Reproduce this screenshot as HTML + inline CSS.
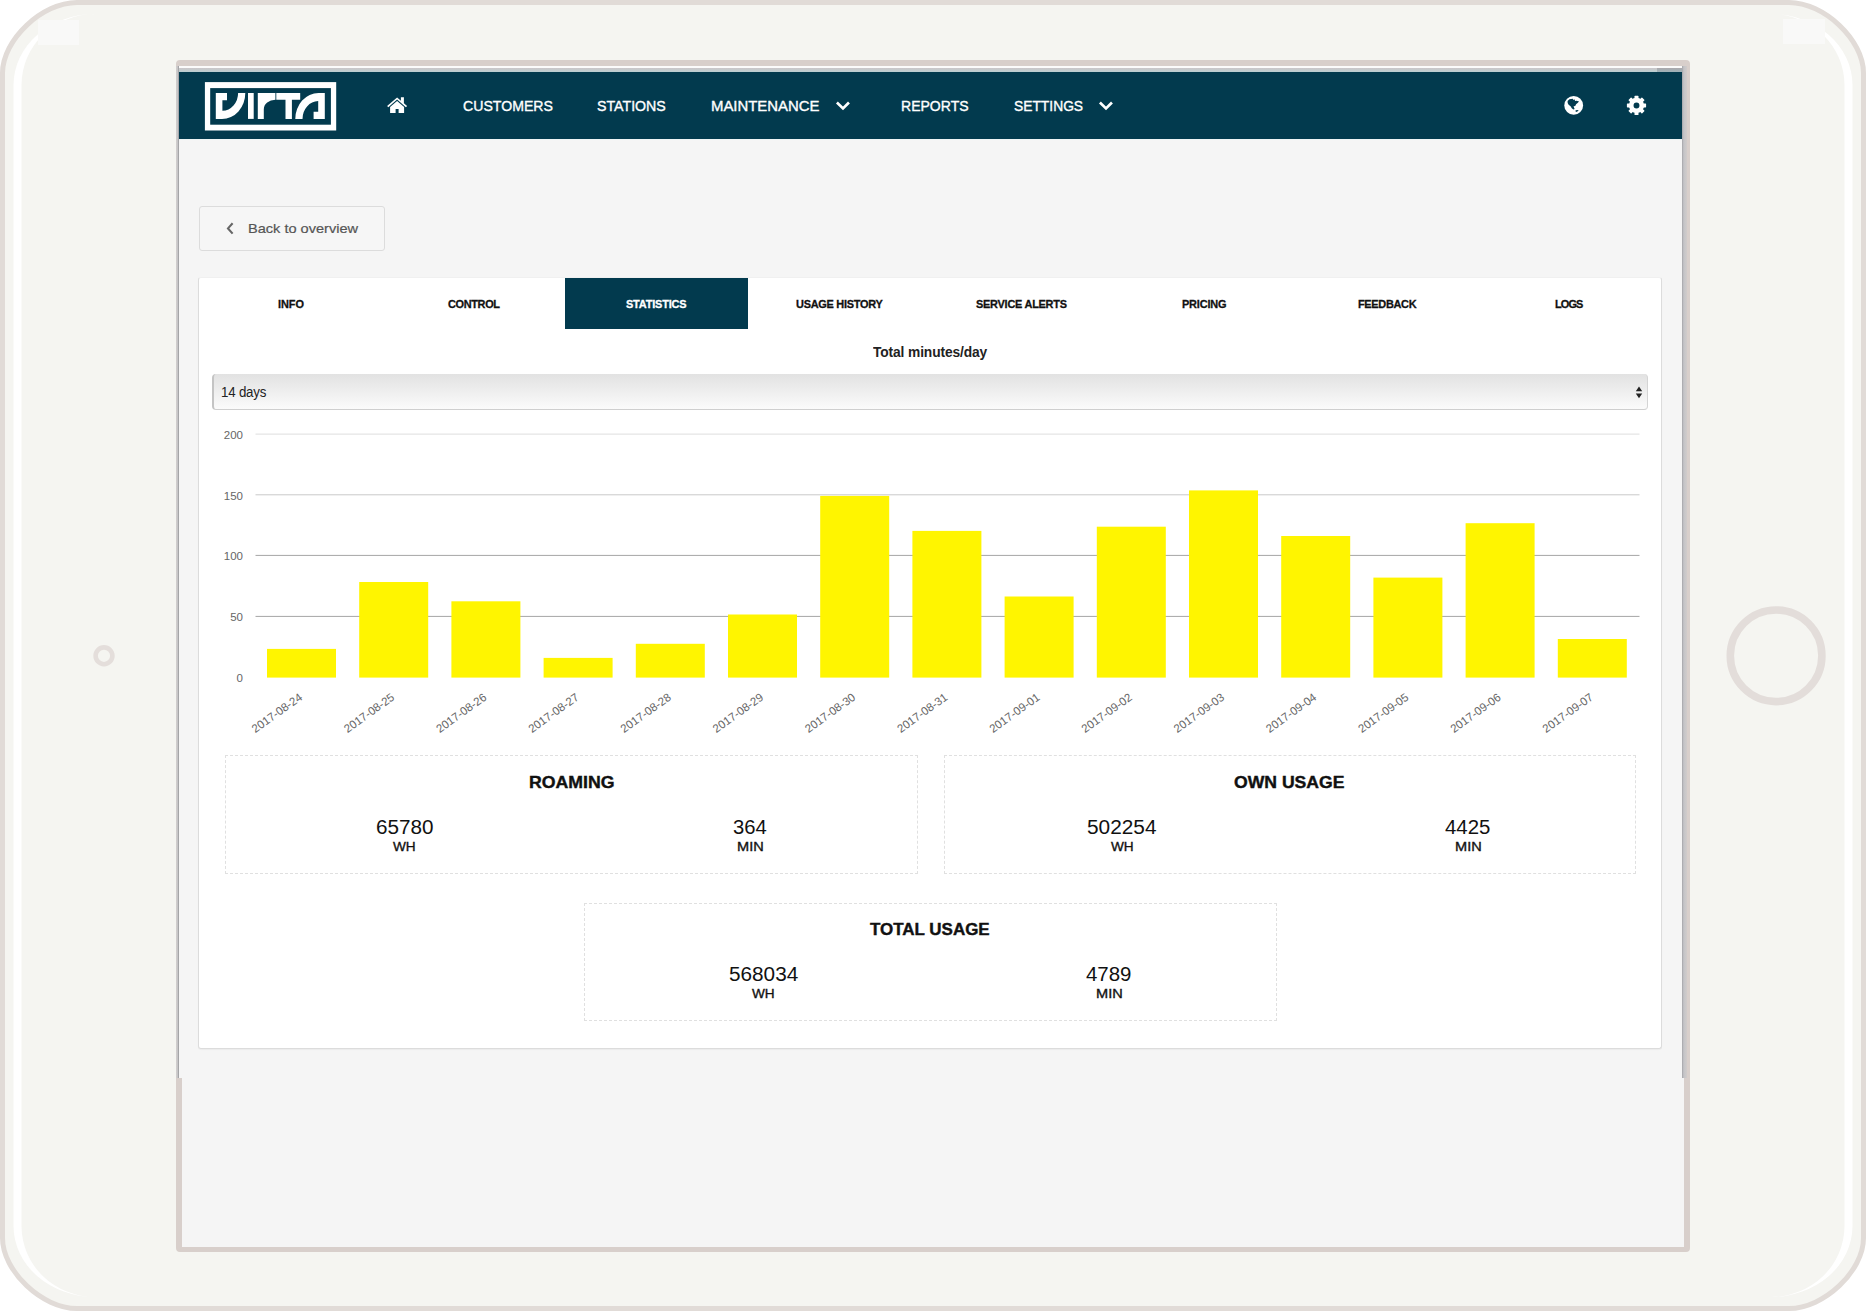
<!DOCTYPE html>
<html><head><meta charset="utf-8"><title>Virta</title>
<style>
html,body{margin:0;padding:0;background:#fff}
body{width:1866px;height:1311px;position:relative;overflow:hidden;font-family:"Liberation Sans",sans-serif}
.a{position:absolute}
.t{position:absolute;white-space:nowrap;line-height:1}
</style></head><body>

<svg class="a" style="left:0;top:0" width="1866" height="1311" viewBox="0 0 1866 1311"><path d="M2.5 73 C2.5 39.865 41.985 2.5 77 2.5 H1789 C1824.02 2.5 1863.5 39.865 1863.5 73 V1238 C1863.5 1271.13 1824.02 1308.5 1789 1308.5 H77 C41.985 1308.5 2.5 1271.13 2.5 1238 Z" fill="#f5f5f1" stroke="#e1dbd7" stroke-width="5"/></svg>
<svg class="a" style="left:0;top:0" width="1866" height="1311" viewBox="0 0 1866 1311">
<g fill="#ffffff">
<path d="M13.5 85 A81.5 71 0 0 1 95 14 A73.5 71 0 0 0 21.5 85 L21.5 1226 A73.5 71 0 0 0 95 1297 A81.5 71 0 0 1 13.5 1226 Z"/>
<path d="M1852.5 85 A81.5 71 0 0 0 1771 14 A73.5 71 0 0 1 1844.5 85 L1844.5 1226 A73.5 71 0 0 1 1771 1297 A81.5 71 0 0 0 1852.5 1226 Z"/>
</g>
<rect x="38" y="20" width="41" height="25" fill="#f9f9f8"/>
<rect x="1783" y="19" width="42" height="25" fill="#f9f9f8"/>
<circle cx="104" cy="655.8" r="8.4" fill="none" stroke="#e4dedb" stroke-width="4.6"/>
<circle cx="1776.1" cy="655.8" r="45.8" fill="none" stroke="#e3ddda" stroke-width="7.6"/>
</svg>
<div class="a" style="left:176px;top:60px;width:1502px;height:1181px;border:solid #d8cfcb;border-width:6px 6px 5px 6px;border-radius:4px;background:#f5f5f5"></div>
<div class="a" style="left:179px;top:66px;width:1503px;height:1012px;background:#f5f5f5"></div>
<div class="a" style="left:175.5px;top:66px;width:3.5px;height:1012px;background:linear-gradient(90deg,#d4d0cf 0,#c4c4c6 60%,#8f8f92 100%)"></div>
<div class="a" style="left:1682px;top:66px;width:4.5px;height:1012px;background:linear-gradient(90deg,#a4a4a8 0,#c4c4c7 35%,#d0cccb 100%)"></div>
<div class="a" style="left:179px;top:66px;width:1503px;height:2px;background:#fbfbfb"></div>
<div class="a" style="left:179px;top:68px;width:1503px;height:4px;background:linear-gradient(180deg,#cbc6ca 0,#c4cbcd 50%,#b9cfd3 100%)"></div>
<div class="a" style="left:1657px;top:68px;width:25px;height:4px;background:linear-gradient(180deg,#aca8ac 0,#a4adb2 50%,#9fb3ba 100%)"></div>
<div class="a" style="left:179px;top:72px;width:1503px;height:66.7px;background:#023a4e"></div>
<div class="a" style="left:179px;top:138.7px;width:1503px;height:1.6px;background:#eef5f6"></div>
<svg class="a" style="left:0;top:0" width="1866" height="200" viewBox="0 0 1866 200">
<rect x="204.9" y="82.1" width="131.3" height="48.4" fill="#fff"/>
<rect x="210.2" y="88.1" width="120.7" height="36.6" fill="#023a4e"/>
<g fill="#fff">
<path id="vv" d="M215.8 93 H227 V100.2 H222.4 V110.8 A16.1 17.8 0 0 0 238.1 93 H245.3 A23.3 26 0 0 1 222 119 H215.8 Z"/>
<rect x="248" y="93" width="5.7" height="25.9"/>
<path d="M257.8 93 H275.4 V99.75 A11.6 9.6 0 0 0 263.8 109.4 V118.9 H257.8 Z"/>
<path d="M276.3 93 H300.2 V99.75 H291.9 V118.9 H285.5 V99.75 H276.3 Z"/>
<path transform="rotate(180 270.3 105.95)" d="M215.8 93 H227 V100.2 H222.4 V110.8 A16.1 17.8 0 0 0 238.1 93 H245.3 A23.3 26 0 0 1 222 119 H215.8 Z"/>
</g>
</svg>
<div class="a" style="left:198px;top:277px;width:1464px;height:771.5px;background:#fff;border:1px solid #dcdcdc;border-top-color:#f0f0f0;box-sizing:border-box;border-radius:3px;box-shadow:0 1px 1px rgba(0,0,0,0.04)"></div>
<div class="a" style="left:199px;top:206px;width:186px;height:45px;box-sizing:border-box;border:1px solid #dcdcdc;border-radius:3px;background:#f6f6f6"></div>
<svg class="a" style="left:224px;top:220px" width="12" height="16" viewBox="0 0 12 16"><path d="M8.6 3.3 L4.0 8.4 L8.6 13.6" fill="none" stroke="#666" stroke-width="2.1" stroke-linecap="butt" stroke-linejoin="miter"/></svg>
<div class="a" style="left:565.2px;top:278px;width:182.6px;height:51px;background:#023a4e"></div>
<div class="a" style="left:212px;top:374px;width:1436px;height:35.6px;box-sizing:border-box;border-radius:4px;background:linear-gradient(180deg,#e2e2e2 0,#ededed 45%,#fbfbfb 100%);border-bottom:1px solid #cfcfcf;border-left:2px solid #c4c4c4;border-right:1px solid #d4d4d4"></div>
<svg class="a" style="left:1634px;top:385px" width="10" height="15" viewBox="0 0 10 15"><path d="M5 1.6 L8.2 6.2 L1.8 6.2 Z M5 13.2 L8.2 8.6 L1.8 8.6 Z" fill="#222"/></svg>
<svg class="a" style="left:0;top:0" width="1866" height="760" viewBox="0 0 1866 760" font-family="'Liberation Sans', sans-serif" font-size="11.5" fill="#666">
<rect x="255.5" y="433.6" width="1384" height="1" fill="#dedede"/>
<rect x="255.5" y="494.3" width="1384" height="1" fill="#c9c9c9"/>
<rect x="255.5" y="554.9" width="1384" height="1" fill="#a6a6a6"/>
<rect x="255.5" y="615.9" width="1384" height="1" fill="#a6a6a6"/>
<text x="243" y="439.0" text-anchor="end">200</text>
<text x="243" y="499.7" text-anchor="end">150</text>
<text x="243" y="560.3" text-anchor="end">100</text>
<text x="243" y="621.3" text-anchor="end">50</text>
<text x="243" y="682.4" text-anchor="end">0</text>
<rect x="267.0" y="648.9" width="69" height="28.7" fill="#fff500"/>
<rect x="359.2" y="582.0" width="69" height="95.6" fill="#fff500"/>
<rect x="451.4" y="601.3" width="69" height="76.3" fill="#fff500"/>
<rect x="543.6" y="657.9" width="69" height="19.7" fill="#fff500"/>
<rect x="635.8" y="643.8" width="69" height="33.8" fill="#fff500"/>
<rect x="728.0" y="614.5" width="69" height="63.1" fill="#fff500"/>
<rect x="820.2" y="495.9" width="69" height="181.7" fill="#fff500"/>
<rect x="912.4" y="530.9" width="69" height="146.7" fill="#fff500"/>
<rect x="1004.6" y="596.5" width="69" height="81.1" fill="#fff500"/>
<rect x="1096.8" y="526.7" width="69" height="150.9" fill="#fff500"/>
<rect x="1189.0" y="490.4" width="69" height="187.2" fill="#fff500"/>
<rect x="1281.2" y="536.0" width="69" height="141.6" fill="#fff500"/>
<rect x="1373.4" y="577.6" width="69" height="100.0" fill="#fff500"/>
<rect x="1465.6" y="523.2" width="69" height="154.4" fill="#fff500"/>
<rect x="1557.8" y="639.0" width="69" height="38.6" fill="#fff500"/>
<text transform="translate(300.7 695.6) rotate(-35.7)" text-anchor="end" dy="4.1">2017-08-24</text>
<text transform="translate(392.9 695.6) rotate(-35.7)" text-anchor="end" dy="4.1">2017-08-25</text>
<text transform="translate(485.1 695.6) rotate(-35.7)" text-anchor="end" dy="4.1">2017-08-26</text>
<text transform="translate(577.3 695.6) rotate(-35.7)" text-anchor="end" dy="4.1">2017-08-27</text>
<text transform="translate(669.5 695.6) rotate(-35.7)" text-anchor="end" dy="4.1">2017-08-28</text>
<text transform="translate(761.7 695.6) rotate(-35.7)" text-anchor="end" dy="4.1">2017-08-29</text>
<text transform="translate(853.9 695.6) rotate(-35.7)" text-anchor="end" dy="4.1">2017-08-30</text>
<text transform="translate(946.1 695.6) rotate(-35.7)" text-anchor="end" dy="4.1">2017-08-31</text>
<text transform="translate(1038.3 695.6) rotate(-35.7)" text-anchor="end" dy="4.1">2017-09-01</text>
<text transform="translate(1130.5 695.6) rotate(-35.7)" text-anchor="end" dy="4.1">2017-09-02</text>
<text transform="translate(1222.7 695.6) rotate(-35.7)" text-anchor="end" dy="4.1">2017-09-03</text>
<text transform="translate(1314.9 695.6) rotate(-35.7)" text-anchor="end" dy="4.1">2017-09-04</text>
<text transform="translate(1407.1 695.6) rotate(-35.7)" text-anchor="end" dy="4.1">2017-09-05</text>
<text transform="translate(1499.3 695.6) rotate(-35.7)" text-anchor="end" dy="4.1">2017-09-06</text>
<text transform="translate(1591.5 695.6) rotate(-35.7)" text-anchor="end" dy="4.1">2017-09-07</text>
</svg>
<div class="a" style="left:225.3px;top:755.3px;width:692.9px;height:118.5px;box-sizing:border-box;border:1px dashed #e0e0e0"></div>
<div class="a" style="left:944.0px;top:755.3px;width:692.2px;height:118.5px;box-sizing:border-box;border:1px dashed #e0e0e0"></div>
<div class="a" style="left:584.1px;top:902.5px;width:692.5px;height:118.2px;box-sizing:border-box;border:1px dashed #e0e0e0"></div>
<svg class="a" style="left:0;top:0" width="1866" height="200" viewBox="0 0 1866 200">
<g fill="#fff">
<path d="M387.1 105.9 L397.1 97.6 L400.9 100.8 V97.2 H403.9 V103.3 L407.1 105.9 L405.9 107.3 L397.1 99.6 L388.3 107.3 Z"/>
<path d="M390.1 107 L397.1 100.9 L404.1 107 V112.9 H398.6 V108.9 H395.6 V112.9 H390.1 Z"/>
</g>
<path d="M837.9 103.5 L843.0 108.4 L848.0 103.5" fill="none" stroke="#fff" stroke-width="2.7" stroke-linecap="square"/><path d="M1100.9 103.5 L1106.0 108.4 L1111.0 103.5" fill="none" stroke="#fff" stroke-width="2.7" stroke-linecap="square"/>
<circle cx="1573.7" cy="105.4" r="9.4" fill="#fff"/>
<path d="M1567.58 101.02 L1569.40 99.20 L1572.64 98.63 L1573.50 100.06 L1574.36 99.30 L1575.22 100.92 L1576.65 100.63 L1579.03 101.40 L1577.60 102.92 L1576.08 104.26 L1575.22 105.98 L1573.60 106.36 L1574.17 108.08 L1574.65 109.03 L1573.40 109.60 L1571.78 108.27 L1570.54 106.36 L1568.63 104.83 L1567.68 102.92 Z" fill="#023a4e"/><path d="M1575.22 110.84 L1576.84 109.89 L1578.65 110.27 L1577.79 111.32 L1576.08 112.08 Z" fill="#023a4e"/>
<g fill="#fff"><rect x="1634.50" y="95.85" width="4" height="5" rx="0.6" transform="rotate(0 1636.50 105.45)"/><rect x="1634.50" y="95.85" width="4" height="5" rx="0.6" transform="rotate(45 1636.50 105.45)"/><rect x="1634.50" y="95.85" width="4" height="5" rx="0.6" transform="rotate(90 1636.50 105.45)"/><rect x="1634.50" y="95.85" width="4" height="5" rx="0.6" transform="rotate(135 1636.50 105.45)"/><rect x="1634.50" y="95.85" width="4" height="5" rx="0.6" transform="rotate(180 1636.50 105.45)"/><rect x="1634.50" y="95.85" width="4" height="5" rx="0.6" transform="rotate(225 1636.50 105.45)"/><rect x="1634.50" y="95.85" width="4" height="5" rx="0.6" transform="rotate(270 1636.50 105.45)"/><rect x="1634.50" y="95.85" width="4" height="5" rx="0.6" transform="rotate(315 1636.50 105.45)"/></g><circle cx="1636.50" cy="105.45" r="5.3" fill="none" stroke="#fff" stroke-width="4.7"/>
</svg>
<span class="t" style="left:462.50px;top:99.35px;font-size:14px;font-weight:normal;color:#fff;transform:scaleX(1.0089);transform-origin:0 0;-webkit-text-stroke:0.35px #fff;">CUSTOMERS</span>
<span class="t" style="left:597.30px;top:99.35px;font-size:14px;font-weight:normal;color:#fff;transform:scaleX(1.0127);transform-origin:0 0;-webkit-text-stroke:0.35px #fff;">STATIONS</span>
<span class="t" style="left:710.80px;top:99.35px;font-size:14px;font-weight:normal;color:#fff;transform:scaleX(1.0647);transform-origin:0 0;-webkit-text-stroke:0.35px #fff;">MAINTENANCE</span>
<span class="t" style="left:901.30px;top:99.35px;font-size:14px;font-weight:normal;color:#fff;transform:scaleX(1.0024);transform-origin:0 0;-webkit-text-stroke:0.35px #fff;">REPORTS</span>
<span class="t" style="left:1013.60px;top:99.35px;font-size:14px;font-weight:normal;color:#fff;letter-spacing:0.000px;transform:scaleX(0.9869);transform-origin:0 0;-webkit-text-stroke:0.35px #fff;">SETTINGS</span>
<span class="t" style="left:248.40px;top:222.17px;font-size:13.5px;font-weight:normal;color:#555;transform:scaleX(1.0789);transform-origin:0 0;-webkit-text-stroke:0.2px #555;">Back to overview</span>
<span class="t" style="left:278.31px;top:298.67px;font-size:11.5px;font-weight:bold;color:#111;letter-spacing:-0.039px;transform:scaleX(0.9500);transform-origin:0 0;-webkit-text-stroke:0.3px #111;">INFO</span>
<span class="t" style="left:447.94px;top:298.67px;font-size:11.5px;font-weight:bold;color:#111;letter-spacing:-0.354px;transform:scaleX(0.9500);transform-origin:0 0;-webkit-text-stroke:0.3px #111;">CONTROL</span>
<span class="t" style="left:626.31px;top:298.67px;font-size:11.5px;font-weight:bold;color:#fff;letter-spacing:-0.190px;transform:scaleX(0.9500);transform-origin:0 0;-webkit-text-stroke:0.3px #fff;">STATISTICS</span>
<span class="t" style="left:795.84px;top:298.67px;font-size:11.5px;font-weight:bold;color:#111;letter-spacing:-0.276px;transform:scaleX(0.9500);transform-origin:0 0;-webkit-text-stroke:0.3px #111;">USAGE HISTORY</span>
<span class="t" style="left:976.31px;top:298.67px;font-size:11.5px;font-weight:bold;color:#111;letter-spacing:-0.252px;transform:scaleX(0.9500);transform-origin:0 0;-webkit-text-stroke:0.3px #111;">SERVICE ALERTS</span>
<span class="t" style="left:1182.19px;top:298.67px;font-size:11.5px;font-weight:bold;color:#111;letter-spacing:-0.180px;transform:scaleX(0.9500);transform-origin:0 0;-webkit-text-stroke:0.3px #111;">PRICING</span>
<span class="t" style="left:1357.76px;top:298.67px;font-size:11.5px;font-weight:bold;color:#111;letter-spacing:-0.315px;transform:scaleX(0.9500);transform-origin:0 0;-webkit-text-stroke:0.3px #111;">FEEDBACK</span>
<span class="t" style="left:1555.49px;top:298.67px;font-size:11.5px;font-weight:bold;color:#111;letter-spacing:-0.900px;transform:scaleX(0.9500);transform-origin:0 0;-webkit-text-stroke:0.3px #111;">LOGS</span>
<span class="t" style="left:873.10px;top:344.73px;font-size:14.5px;font-weight:bold;color:#222;letter-spacing:-0.125px;transform:scaleX(0.9500);transform-origin:0 0;">Total minutes/day</span>
<span class="t" style="left:221.00px;top:384.95px;font-size:14px;font-weight:normal;color:#222;letter-spacing:-0.210px;transform:scaleX(0.9500);transform-origin:0 0;">14 days</span>
<span class="t" style="left:528.60px;top:774.03px;font-size:16.5px;font-weight:bold;color:#111;transform:scaleX(1.0721);transform-origin:0 0;-webkit-text-stroke:0.4px #111;">ROAMING</span>
<span class="t" style="left:1233.50px;top:774.03px;font-size:16.5px;font-weight:bold;color:#111;transform:scaleX(1.0667);transform-origin:0 0;-webkit-text-stroke:0.4px #111;">OWN USAGE</span>
<span class="t" style="left:870.30px;top:921.03px;font-size:16.5px;font-weight:bold;color:#111;transform:scaleX(1.0280);transform-origin:0 0;-webkit-text-stroke:0.4px #111;">TOTAL USAGE</span>
<span class="t" style="left:375.65px;top:818.29px;font-size:19.5px;font-weight:normal;color:#111;transform:scaleX(1.0602);transform-origin:0 0;">65780</span>
<span class="t" style="left:392.65px;top:839.80px;font-size:13px;font-weight:normal;color:#111;transform:scaleX(1.0474);transform-origin:0 0;-webkit-text-stroke:0.35px #111;">WH</span>
<span class="t" style="left:733.10px;top:818.29px;font-size:19.5px;font-weight:normal;color:#111;transform:scaleX(1.0385);transform-origin:0 0;">364</span>
<span class="t" style="left:736.85px;top:839.80px;font-size:13px;font-weight:normal;color:#111;transform:scaleX(1.1198);transform-origin:0 0;-webkit-text-stroke:0.35px #111;">MIN</span>
<span class="t" style="left:1087.45px;top:818.29px;font-size:19.5px;font-weight:normal;color:#111;transform:scaleX(1.0679);transform-origin:0 0;">502254</span>
<span class="t" style="left:1110.65px;top:839.80px;font-size:13px;font-weight:normal;color:#111;transform:scaleX(1.0474);transform-origin:0 0;-webkit-text-stroke:0.35px #111;">WH</span>
<span class="t" style="left:1445.30px;top:818.29px;font-size:19.5px;font-weight:normal;color:#111;transform:scaleX(1.0463);transform-origin:0 0;">4425</span>
<span class="t" style="left:1454.85px;top:839.80px;font-size:13px;font-weight:normal;color:#111;transform:scaleX(1.1198);transform-origin:0 0;-webkit-text-stroke:0.35px #111;">MIN</span>
<span class="t" style="left:728.80px;top:965.29px;font-size:19.5px;font-weight:normal;color:#111;transform:scaleX(1.0633);transform-origin:0 0;">568034</span>
<span class="t" style="left:751.65px;top:986.80px;font-size:13px;font-weight:normal;color:#111;transform:scaleX(1.0474);transform-origin:0 0;-webkit-text-stroke:0.35px #111;">WH</span>
<span class="t" style="left:1086.45px;top:965.29px;font-size:19.5px;font-weight:normal;color:#111;transform:scaleX(1.0486);transform-origin:0 0;">4789</span>
<span class="t" style="left:1096.05px;top:986.80px;font-size:13px;font-weight:normal;color:#111;transform:scaleX(1.1198);transform-origin:0 0;-webkit-text-stroke:0.35px #111;">MIN</span>
</body></html>
